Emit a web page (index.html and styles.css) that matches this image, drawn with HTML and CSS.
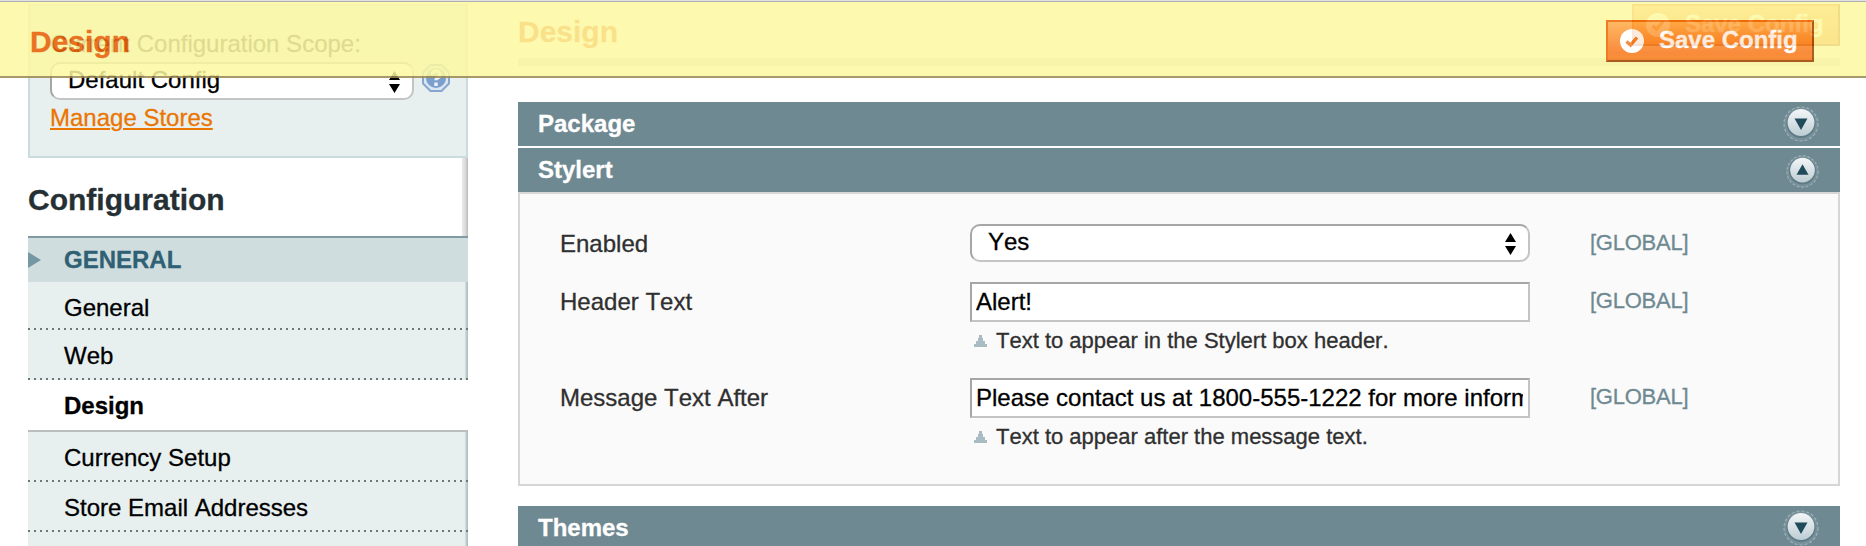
FILE: index.html
```html
<!DOCTYPE html>
<html lang="en">
<head>
<meta charset="utf-8">
<title>Design / Configuration</title>
<link rel="stylesheet" href="styles.css">
</head>
<body>
<svg class="defs" width="0" height="0" aria-hidden="true">
  <defs>
    <linearGradient id="knob" x1="0" y1="0" x2="0" y2="1"><stop offset="0" stop-color="#f4f6f8"/><stop offset="1" stop-color="#bccdd3"/></linearGradient>
    <symbol id="toggle" viewBox="0 0 38 38">
      <circle cx="19" cy="19" r="17" fill="#78919a" stroke="#9bb0b7" stroke-width="1.2" stroke-dasharray="3 2"/>
      <circle cx="19" cy="18.500" r="14.600" fill="#5f7b85"/>
      <circle cx="19" cy="17.500" r="13.400" fill="url(#knob)"/>
    </symbol>
    <symbol id="check" viewBox="0 0 24 24">
      <circle cx="12" cy="12" r="12" fill="#fff"/>
      <path d="M6.500 12.500l4 3.500 6.500-7.500" fill="none" stroke="#f47a20" stroke-width="3.400"/>
    </symbol>
    <symbol id="updown" viewBox="0 0 11 22">
      <path d="M0 9L5.500 0 11 9zM0 13h11l-5.500 9z" fill="#000"/>
    </symbol>
    <symbol id="hint" viewBox="0 0 13 12">
      <path d="M5 0h3v3h1v3h2v3h2v3H0V9h2V6h2V3h1z" fill="#a9bcc3"/>
    </symbol>
  </defs>
</svg>

<div class="floating">
  <h3 class="title">Design</h3>
  <button class="save"><svg class="save-icon"><use href="#check"/></svg>Save Config</button>
</div>

<div class="page">
  <aside class="side">
    <section class="scope-box">
      <div class="scope-label">Current Configuration Scope:</div>
      <div class="scope-row">
        <div class="select scope-select">Default Config<svg class="updown"><use href="#updown"/></svg></div>
        <svg class="help" viewBox="0 0 28 28">
          <path d="M8.500 1h11L27 8.500v11L19.500 27h-11L1 19.500v-11z" fill="#dbe6f1" stroke="#86a6d0" stroke-width="2"/>
          <circle cx="14" cy="14" r="10" fill="#7ba0cd"/>
          <path d="M10.500 10.500a3.600 3.600 0 1 1 5 3.400c-1 .5-1.500 1-1.500 2.300M14 18.500v3.500" fill="none" stroke="#eef4fa" stroke-width="3.400"/>
        </svg>
      </div>
      <a class="manage">Manage Stores</a>
    </section>
    <div class="side-head"><h3>Configuration</h3></div>
    <nav class="nav">
      <div class="nav-group"><svg class="nav-arrow" viewBox="0 0 13 16"><path d="M0 0l13 8-13 8z" fill="#7498a3"/></svg>GENERAL</div>
      <a class="item first">General</a>
      <a class="item">Web</a>
      <a class="item current">Design</a>
      <a class="item">Currency Setup</a>
      <a class="item">Store Email Addresses</a>
      <a class="item last"></a>
    </nav>
  </aside>

  <main class="main">
    <header class="content-head">
      <h3 class="title">Design</h3>
      <button class="save"><svg class="save-icon"><use href="#check"/></svg>Save Config</button>
    </header>
    <div class="bar">Package<svg class="toggle" viewBox="0 0 38 38"><use href="#toggle"/><path d="M12.500 13.500h13l-6.500 11.500z" fill="#1f4b5b"/></svg></div>
    <div class="bar open">Stylert<svg class="toggle up" viewBox="0 0 38 38"><use href="#toggle"/><path d="M12.500 22.500h13L19 11z" fill="#1f4b5b"/></svg></div>
    <div class="panel">
      <div class="row">
        <label>Enabled</label>
        <div class="select">Yes<svg class="updown"><use href="#updown"/></svg></div>
        <span class="scope">[GLOBAL]</span>
      </div>
      <div class="row">
        <label>Header Text</label>
        <div>
          <div class="input"><span>Alert!</span></div>
          <p class="note"><svg class="hint"><use href="#hint"/></svg>Text to appear in the Stylert box header.</p>
        </div>
        <span class="scope">[GLOBAL]</span>
      </div>
      <div class="row">
        <label>Message Text After</label>
        <div>
          <div class="input"><span>Please contact us at 1800-555-1222 for more inform</span></div>
          <p class="note"><svg class="hint"><use href="#hint"/></svg>Text to appear after the message text.</p>
        </div>
        <span class="scope">[GLOBAL]</span>
      </div>
    </div>
    <div class="bar themes">Themes<svg class="toggle" viewBox="0 0 38 38"><use href="#toggle"/><path d="M12.500 13.500h13l-6.500 11.500z" fill="#1f4b5b"/></svg></div>
  </main>
</div>
</body>
</html>
```
FILE: styles.css
```css
* { box-sizing: border-box; }
html, body { height: 546px; overflow: hidden; }
body {
  margin: 0;
  background: #fff;
  color: #2f2f2f;
  font: 24px "Liberation Sans", Arial, sans-serif;
  font-kerning: none;
  -webkit-text-stroke: .3px;
}
h3, p { margin: 0; }
.defs { position: absolute; }

/* translucent header laid over the scrolled page */
.floating {
  position: absolute;
  inset: 0 0 auto 0;
  z-index: 2;
  height: 78px;
  display: flex;
  justify-content: space-between;
  padding: 19px 52px 0 30px;
  background: #fdf9a2;
  border-top: 1px solid #dcdcdc;
  border-bottom: 2px solid #9a8851;
  box-shadow: inset 0 1px #a2a2a2;
  opacity: .85;
}
.title { font-size: 30px; line-height: 46px; color: #eb5e00; }
.floating .title { line-height: 44px; }

.save {
  display: flex;
  align-items: center;
  width: 208px;
  height: 42px;
  padding: 0 0 2px 12px;
  border: 2px solid;
  border-color: #ed6502 #a04300 #a04300 #ed6502;
  background: linear-gradient(#ffac47, #f8781b 80%, #f77c16);
  color: #fff;
  font: bold 24px "Liberation Sans", Arial, sans-serif;
  font-kerning: none;
  white-space: nowrap;
}
.save-icon { width: 24px; height: 24px; margin: 1px 15px 0 0; flex: none; }

.page { display: flex; height: 546px; padding: 4px 26px 0 28px; overflow: hidden; }
.side { width: 440px; margin-right: 50px; flex: none; }
.main { flex: 1; }

.scope-box {
  height: 154px;
  padding: 17px 0 0 20px;
  border: 2px solid #cbdcde;
  background: #e7efef;
}
.scope-label { height: 39px; line-height: 41px; }
.scope-row { display: flex; gap: 8px; }
.select {
  display: flex;
  align-items: center;
  justify-content: space-between;
  height: 38px;
  padding: 0 12px 2px 16px;
  border: 2px solid;
  border-color: #a6a6a6 #c4c4c4 #c4c4c4 #a6a6a6;
  border-radius: 10px;
  background: #fff;
  color: #000;
}
.scope-select { width: 364px; }
.updown { width: 11px; height: 22px; margin-top: 3px; }
.help { width: 28px; height: 28px; margin-top: 2px; }
.manage {
  display: block;
  width: max-content;
  line-height: 35px;
  color: #ea7601;
  text-decoration: underline;
  text-decoration-thickness: 2px;
  text-underline-offset: 2px;
}

.side-head {
  height: 78px;
  background: linear-gradient(90deg, #e9e9e9, #dedede 50%, #b9b9b9) right / 6px 100% no-repeat;
}
.side-head h3 { font-size: 30px; line-height: 84px; color: #253034; }

.nav-group {
  display: flex;
  align-items: center;
  height: 46px;
  border-top: 2px solid #7f9ba4;
  background: #d0dddf;
  color: #2f6074;
  font-weight: bold;
}
.nav-arrow { width: 13px; height: 16px; margin: 0 23px 0 0; }
.item {
  display: block;
  height: 50px;
  padding: 12px 0 0 36px;
  line-height: 28px;
  color: #000;
  background:
    repeating-linear-gradient(90deg, #6e7878 0 2px, transparent 2px 6px) bottom / 100% 2px no-repeat,
    linear-gradient(90deg, #d5e1e2, #a5b9bc) right / 3px 100% no-repeat,
    #e7efef;
}
.item.first { height: 48px; }
.item.current { height: 52px; background: #fff; border-bottom: 2px solid #bbbebe; font-weight: bold; }
.item.last { height: 14px; background: linear-gradient(90deg, #d5e1e2, #a5b9bc) right / 3px 100% no-repeat, #e7efef; }

.content-head {
  display: flex;
  justify-content: space-between;
  height: 62px;
  margin-bottom: 36px;
  border-bottom: 8px solid #dfdfdf;
}
.content-head .title { line-height: 55px; }

.bar {
  display: flex;
  justify-content: space-between;
  height: 44px;
  margin-bottom: 2px;
  padding: 0 20px;
  background: #6f8992;
  color: #fff;
  font-weight: bold;
  line-height: 44px;
}
.bar.open { margin-bottom: 0; }
.bar.themes { height: 40px; margin-bottom: 0; }
.toggle { width: 38px; height: 38px; margin: 3px 0 0; }
.toggle.up { width: 35px; height: 35px; margin: 6px 0 0; }

.panel {
  height: 294px;
  margin-bottom: 20px;
  padding: 30px 0 0 40px;
  border: 2px solid #d6d6d6;
  background: #fafafa;
}
.row { display: grid; grid-template-columns: 410px 560px 1fr; margin-bottom: 20px; }
.row:first-child { height: 38px; }
.row label { line-height: 40px; }
.scope { padding-left: 60px; font-size: 22px; line-height: 37px; letter-spacing: -.25px; color: #6f8992; }
.input {
  height: 40px;
  padding: 0 5px 0 4px;
  border: 2px solid;
  border-color: #a6a6a6 #c4c4c4 #c4c4c4 #a6a6a6;
  background: #fff;
  color: #000;
  line-height: 35px;
}
.input span { display: block; overflow: hidden; white-space: nowrap; }
.note { display: flex; height: 36px; font-size: 22px; line-height: 37px; }
.hint { width: 13px; height: 12px; margin: 13px 9px 0 4px; }
```
